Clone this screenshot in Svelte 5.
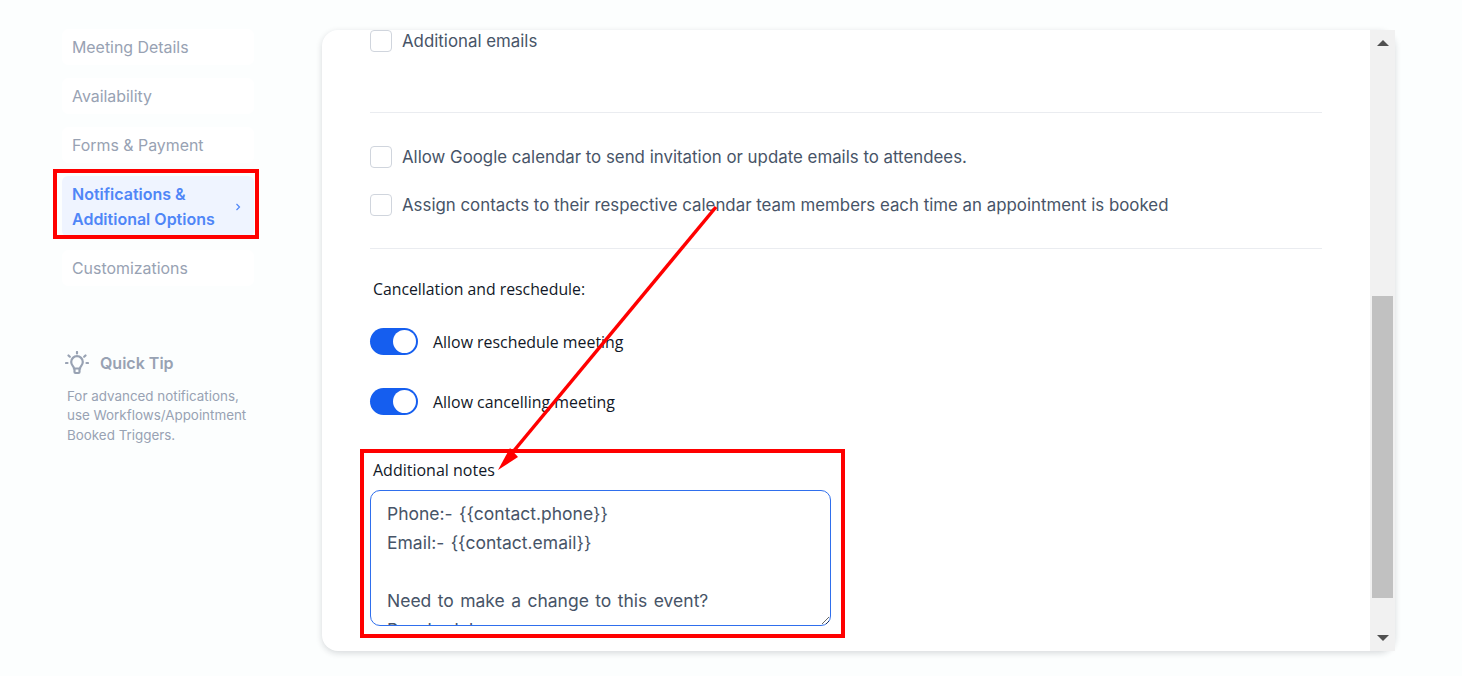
<script lang="ts">
  const steps = [
    { label: 'Meeting Details' },
    { label: 'Availability' },
    { label: 'Forms & Payment' },
    { label: 'Notifications & Additional Options', active: true },
    { label: 'Customizations' }
  ];
  const notes = 'Phone:- {{contact.phone}}\nEmail:- {{contact.email}}\n\nNeed to make a change to this event?\nReschedule:\n{{reschedule_link}}';
</script>

<div class="page">
  <aside class="sidebar">
    <nav class="steps">
      {#each steps as step}
        <div class="step" class:active={step.active}>
          <span>{step.label}</span>
          {#if step.active}
            <svg class="chevron" viewBox="0 0 8 10" fill="none" stroke="currentColor" stroke-width="1.2"><path d="M2.5 2 5.5 5 2.5 8" /></svg>
          {/if}
        </div>
      {/each}
    </nav>
    <div class="tip">
      <div class="tip-head">
        <svg class="bulb" viewBox="0 0 24 24" fill="none" stroke="currentColor" stroke-width="2.2" stroke-linecap="round">
          <path d="M12 1v1.500M3.500 4.500l1.300 1.200M20.500 4.500l-1.300 1.200M1 12h1.500M21.500 12H23" />
          <path d="M9 17.500c0-2-2.800-3-2.800-6.500a5.800 5.800 0 0 1 11.600 0c0 3.500-2.800 4.500-2.800 6.500z" />
          <path d="M9.500 18v3a1 1 0 0 0 1 1h3a1 1 0 0 0 1-1v-3" />
        </svg>
        <span>Quick Tip</span>
      </div>
      <p>For advanced notifications, use Workflows/Appointment Booked Triggers.</p>
    </div>
  </aside>

  <main class="card">
    <div class="content">
      <label class="check first"><span class="box"></span>Additional emails</label>
      <hr class="rule-one" />
      <label class="check google"><span class="box"></span>Allow Google calendar to send invitation or update emails to attendees.</label>
      <label class="check assign"><span class="box"></span>Assign contacts to their respective calendar team members each time an appointment is booked</label>
      <hr class="rule-two" />
      <div class="field-label cancel">Cancellation and reschedule:</div>
      <div class="switch-row reschedule"><span class="switch"><span class="knob"></span></span>Allow reschedule meeting</div>
      <div class="switch-row cancelling"><span class="switch"><span class="knob"></span></span>Allow cancelling meeting</div>
      <div class="field-label notes-label">Additional notes</div>
      <textarea class="notes" readonly value={notes}></textarea>
    </div>
    <div class="scrollbar">
      <svg class="arrow" viewBox="0 0 14 8"><path d="M7 1 13 7H1z" /></svg>
      <div class="track"><div class="thumb"></div></div>
      <svg class="arrow" viewBox="0 0 14 8"><path d="M1 1H13L7 7z" /></svg>
    </div>
  </main>

  <div class="callout nav-callout"></div>
  <div class="callout notes-callout"></div>
  <svg class="pointer" viewBox="0 0 1462 676">
    <line x1="716" y1="207" x2="512" y2="453" stroke="#ff0000" stroke-width="3.5" />
    <polygon points="498,470 518,457 510,448" fill="#ff0000" />
  </svg>
</div>

<style>
  :global(body) {
    margin: 0;
    background: #fcfefe;
    overflow: hidden;
  }

  .page {
    position: relative;
    display: flex;
    align-items: flex-start;
    height: 676px;
    padding: 29px 0 0 62px;
    box-sizing: border-box;
    font-family: Inter, "Liberation Sans", sans-serif;
  }

  .sidebar {
    width: 192px;
    flex-shrink: 0;
    margin-right: 68px;
  }

  .steps {
    display: flex;
    flex-direction: column;
    gap: 13px;
  }

  .step {
    display: flex;
    align-items: center;
    justify-content: space-between;
    min-height: 36px;
    padding: 0 10px;
    box-sizing: border-box;
    border-radius: 6px;
    background: #ffffff;
    color: #98a2b3;
    font-size: 15.900px;
    line-height: 25px;
  }

  .step.active {
    padding: 6px 10px 5px;
    background: #eff4ff;
    color: #4f86f7;
    font-size: 16px;
    font-weight: 600;
  }

  .step.active span {
    width: 160px;
  }

  .chevron {
    width: 8px;
    height: 10px;
    margin-right: 2px;
  }

  .tip {
    margin-top: 65px;
    margin-left: 3px;
  }

  .tip-head {
    display: flex;
    align-items: center;
    gap: 11px;
    color: #98a2b3;
    font-size: 16px;
    font-weight: 600;
  }

  .bulb {
    width: 24px;
    height: 24px;
  }

  .tip p {
    width: 190px;
    margin: 11.500px 0 0 2px;
    color: #98a2b3;
    font-size: 13.400px;
    line-height: 19.500px;
  }

  .card {
    display: flex;
    width: 1073px;
    height: 621px;
    margin-top: 1px;
    border-radius: 16px;
    background: #ffffff;
    box-shadow: 0 2px 6px rgba(16, 24, 40, 0.16);
  }

  .content {
    flex: 1;
    min-width: 0;
    padding: 0 48px;
    overflow: hidden;
  }

  .check {
    display: flex;
    align-items: center;
    gap: 10px;
    height: 22px;
    color: #475467;
    font-size: 16.850px;
    white-space: nowrap;
  }

  .box {
    width: 20px;
    height: 20px;
    flex-shrink: 0;
    border: 1px solid #d0d5dd;
    border-radius: 4px;
    background: #ffffff;
  }

  .first {
    margin-top: 0;
  }

  hr {
    height: 1px;
    margin: 0;
    border: 0;
    background: #eaecf0;
  }

  .rule-one {
    margin-top: 60px;
  }

  .google {
    margin-top: 33px;
  }

  .assign {
    margin-top: 26px;
  }

  .rule-two {
    margin-top: 32px;
  }

  .field-label {
    margin-left: 3px;
    color: #111827;
    font-family: "Open Sans", sans-serif;
    font-size: 15.800px;
    line-height: 22px;
  }

  .cancel {
    margin-top: 29px;
  }

  .switch-row {
    display: flex;
    align-items: center;
    gap: 15px;
    color: #111827;
    font-family: "Open Sans", sans-serif;
    font-size: 15.900px;
  }

  .reschedule {
    margin-top: 28px;
  }

  .cancelling {
    margin-top: 33px;
  }

  .switch {
    display: flex;
    align-items: center;
    justify-content: flex-end;
    width: 48px;
    height: 27px;
    padding: 0 2px;
    box-sizing: border-box;
    border-radius: 14px;
    background: #155eef;
  }

  .knob {
    width: 23px;
    height: 23px;
    border-radius: 50%;
    background: #ffffff;
  }

  .notes-label {
    margin-top: 44px;
    font-size: 16px;
  }

  .notes {
    display: block;
    width: 461px;
    height: 136px;
    margin-top: 9px;
    padding: 8px 16px;
    box-sizing: border-box;
    border: 1px solid #2f6fed;
    border-radius: 10px;
    outline: none;
    overflow: hidden;
    resize: vertical;
    color: #475467;
    font-family: Inter, sans-serif;
    font-size: 17.500px;
    word-spacing: 1.500px;
    line-height: 29px;
  }

  .scrollbar {
    display: flex;
    flex-direction: column;
    align-items: center;
    width: 25px;
    flex-shrink: 0;
    background: #f1f1f1;
  }

  .arrow {
    width: 14px;
    height: 8px;
    margin: 9px 0;
    fill: #505050;
  }

  .track {
    flex: 1;
    width: 100%;
    padding: 240px 2px 0 2px;
    box-sizing: border-box;
  }

  .thumb {
    height: 302px;
    background: #c1c1c1;
  }

  .callout {
    position: absolute;
    box-sizing: border-box;
    border: 4px solid #ff0000;
    pointer-events: none;
  }

  .nav-callout {
    left: 53px;
    top: 169px;
    width: 206px;
    height: 70px;
  }

  .notes-callout {
    left: 360px;
    top: 449px;
    width: 485px;
    height: 189px;
  }

  .pointer {
    position: absolute;
    left: 0;
    top: 0;
    width: 1462px;
    height: 676px;
    pointer-events: none;
  }
</style>
